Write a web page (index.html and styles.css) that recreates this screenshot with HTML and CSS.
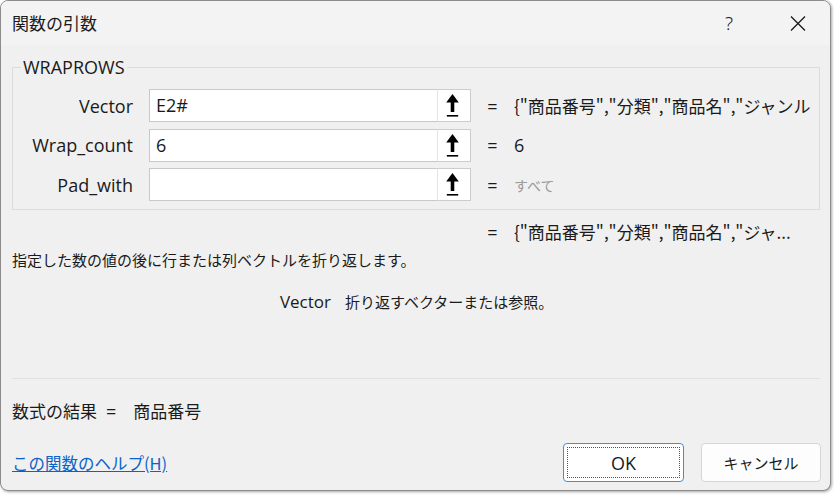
FILE: index.html
```html
<!DOCTYPE html>
<html lang="ja">
<head>
<meta charset="utf-8">
<title>関数の引数</title>
<link rel="stylesheet" href="styles.css">
</head>
<body>
<div class="window">
  <div class="titlebar">
    <span class="title">関数の引数</span>
    <span class="tb-help">?</span>
    <span class="tb-close">
      <svg width="16" height="15" viewBox="0 0 16 15"><path d="M1 0.5 L15 14.5 M15 0.5 L1 14.5" stroke="#1a1a1a" stroke-width="1.3" fill="none"/></svg>
    </span>
  </div>
  <div class="content">
    <fieldset class="group">
      <legend class="legend">WRAPROWS</legend>
      <div class="args">
        <label class="arg-label">Vector</label>
        <div class="field"><span class="field-text">E2#</span><span class="ref-btn"><svg width="13" height="23" viewBox="0 0 13 23"><path d="M6.5 0 L12.8 8.5 L8.3 8.5 L8.3 18 L4.7 18 L4.7 8.5 L0.2 8.5 Z" fill="#000"/><rect x="0.8" y="21" width="11.4" height="1.6" fill="#000"/></svg></span></div>
        <span class="eq">=</span>
        <span class="arg-value">{"商品番号","分類","商品名","ジャンル</span>

        <label class="arg-label">Wrap_count</label>
        <div class="field"><span class="field-text">6</span><span class="ref-btn"><svg width="13" height="23" viewBox="0 0 13 23"><path d="M6.5 0 L12.8 8.5 L8.3 8.5 L8.3 18 L4.7 18 L4.7 8.5 L0.2 8.5 Z" fill="#000"/><rect x="0.8" y="21" width="11.4" height="1.6" fill="#000"/></svg></span></div>
        <span class="eq">=</span>
        <span class="arg-value latin">6</span>

        <label class="arg-label">Pad_with</label>
        <div class="field"><span class="field-text"></span><span class="ref-btn"><svg width="13" height="23" viewBox="0 0 13 23"><path d="M6.5 0 L12.8 8.5 L8.3 8.5 L8.3 18 L4.7 18 L4.7 8.5 L0.2 8.5 Z" fill="#000"/><rect x="0.8" y="21" width="11.4" height="1.6" fill="#000"/></svg></span></div>
        <span class="eq">=</span>
        <span class="arg-value muted">すべて</span>
      </div>
    </fieldset>

    <div class="result-row">
      <span class="eq">=</span>
      <span class="result-value">{"商品番号","分類","商品名","ジャ...</span>
    </div>

    <p class="description">指定した数の値の後に行または列ベクトルを折り返します。</p>

    <div class="arg-help">
      <span class="arg-help-name">Vector</span>
      <span class="arg-help-text">折り返すベクターまたは参照。</span>
    </div>

    <hr class="separator">

    <div class="formula-result">
      <span>数式の結果</span>
      <span class="fr-eq">=</span>
      <span>商品番号</span>
    </div>

    <div class="footer">
      <a class="help-link" href="#">この関数のヘルプ(H)</a>
      <div class="buttons">
        <button class="btn btn-ok"><span class="focus-ring">OK</span></button>
        <button class="btn btn-cancel">キャンセル</button>
      </div>
    </div>
  </div>
</div>
</body>
</html>
```

FILE: styles.css
```css
* {
  box-sizing: border-box;
}

html, body {
  margin: 0;
  padding: 0;
}

body {
  width: 834px;
  height: 495px;
  background: #ffffff;
  font-family: "Open Sans", "Noto Sans CJK JP", sans-serif;
  color: #000;
  overflow: hidden;
}

.window {
  width: 831px;
  height: 491px;
  border: 1px solid #8c8c8c;
  border-radius: 8px;
  background: #f0f0f0;
  overflow: hidden;
  display: flex;
  flex-direction: column;
  box-shadow: 1px 1px 3px rgba(0, 0, 0, 0.35);
}

.titlebar {
  height: 44px;
  flex: none;
  background: #f3f3f3;
  display: flex;
  align-items: center;
  padding-left: 11px;
  padding-right: 9px;
}

.title {
  font-family: "Noto Sans CJK JP", sans-serif;
  font-size: 17px;
  line-height: 24px;
  color: #1a1a1a;
}

.tb-help {
  margin-left: auto;
  width: 46px;
  text-align: center;
  font-family: "Noto Sans", sans-serif;
  font-weight: 300;
  font-size: 19px;
  line-height: 24px;
  color: #1a1a1a;
  margin-right: 23px;
}

.tb-close {
  width: 46px;
  height: 24px;
  display: flex;
  align-items: center;
  justify-content: center;
}

.content {
  flex: 1;
  padding: 0 9px 0 11px;
  display: flex;
  flex-direction: column;
}

.group {
  margin: 10px 1px 0 0;
  padding: 10px 0 8px 0;
  border: 1px solid #dcdcdc;
  min-width: 0;
}

.legend {
  margin-left: 8px;
  padding: 0 2px;
  font-size: 18px;
  line-height: 24px;
  color: #1a1a1a;
}

.args {
  display: grid;
  grid-template-columns: 120px 322px 11px minmax(0, 1fr);
  column-gap: 16px;
  row-gap: 6.5px;
  align-items: center;
}

.arg-label {
  text-align: right;
  font-size: 18px;
  line-height: 24px;
  color: #1a1a1a;
}

.field {
  height: 33px;
  display: flex;
  background: #ffffff;
  border: 1px solid #c8c8c8;
}

.field-text {
  flex: 1;
  padding-left: 6px;
  font-size: 18px;
  line-height: 31px;
  color: #1a1a1a;
}

.ref-btn {
  width: 34px;
  margin: -1px -1px -1px 0;
  border: 1px solid #cccccc;
  border-left-color: #e3e3e3;
  background: #ffffff;
  display: flex;
  align-items: center;
  justify-content: center;
  padding-right: 3px;
}

.eq {
  font-size: 18px;
  line-height: 24px;
  text-align: center;
  color: #1a1a1a;
}

.arg-value {
  font-family: "Noto Sans CJK JP", sans-serif;
  font-size: 17px;
  line-height: 24px;
  white-space: nowrap;
  color: #1a1a1a;
}

.arg-value.latin {
  font-family: "Open Sans", sans-serif;
  font-size: 18px;
}

.arg-value.muted {
  font-size: 14px;
  color: #9a9a9a;
}

.result-row {
  margin-top: 10px;
  height: 24px;
  display: flex;
  align-items: center;
  gap: 16px;
  padding-left: 475px;
}

.result-row .eq {
  width: 11px;
}

.result-value {
  font-family: "Noto Sans CJK JP", sans-serif;
  font-size: 17px;
  line-height: 24px;
  white-space: nowrap;
  color: #1a1a1a;
}

.description {
  margin: 4px 0 0 0;
  font-family: "Noto Sans CJK JP", sans-serif;
  font-size: 15px;
  line-height: 24px;
  color: #1a1a1a;
}

.arg-help {
  margin-top: 18px;
  display: grid;
  grid-template-columns: 319px auto;
  column-gap: 14px;
  align-items: center;
  height: 24px;
}

.arg-help-name {
  text-align: right;
  font-size: 17px;
  line-height: 24px;
  color: #1a1a1a;
}

.arg-help-text {
  font-family: "Noto Sans CJK JP", sans-serif;
  font-size: 15px;
  line-height: 24px;
  color: #1a1a1a;
}

.separator {
  margin: 64px 1px 0 0;
  height: 1px;
  border: none;
  background: #e0e0e0;
}

.formula-result {
  margin-top: 20px;
  height: 24px;
  display: flex;
  align-items: center;
  font-family: "Noto Sans CJK JP", sans-serif;
  font-size: 17px;
  line-height: 24px;
  color: #1a1a1a;
}

.fr-eq {
  font-family: "Open Sans", sans-serif;
  font-size: 18px;
  margin: 0 17px 0 9px;
}

.footer {
  margin-top: 20px;
  display: flex;
  align-items: center;
}

.help-link {
  font-family: "Noto Sans CJK JP", sans-serif;
  font-size: 16.5px;
  line-height: 24px;
  color: #0a64c8;
  text-decoration: underline;
}

.buttons {
  margin-left: auto;
  display: flex;
  gap: 17px;
}

.btn {
  height: 39px;
  border-radius: 4px;
  background: #fdfdfd;
  font-family: "Open Sans", "Noto Sans CJK JP", sans-serif;
  color: #1a1a1a;
  padding: 0;
  margin: 0;
}

.btn-ok {
  width: 121px;
  border: 1px solid #3f8ee0;
  background: #ffffff;
  padding: 3px;
  font-size: 18px;
}

.focus-ring {
  display: flex;
  align-items: center;
  justify-content: center;
  height: 100%;
  border: 1px dotted #555;
}

.btn-cancel {
  width: 120px;
  border: 1px solid #d6d6d6;
  font-family: "Noto Sans CJK JP", sans-serif;
  font-size: 15px;
}
```
